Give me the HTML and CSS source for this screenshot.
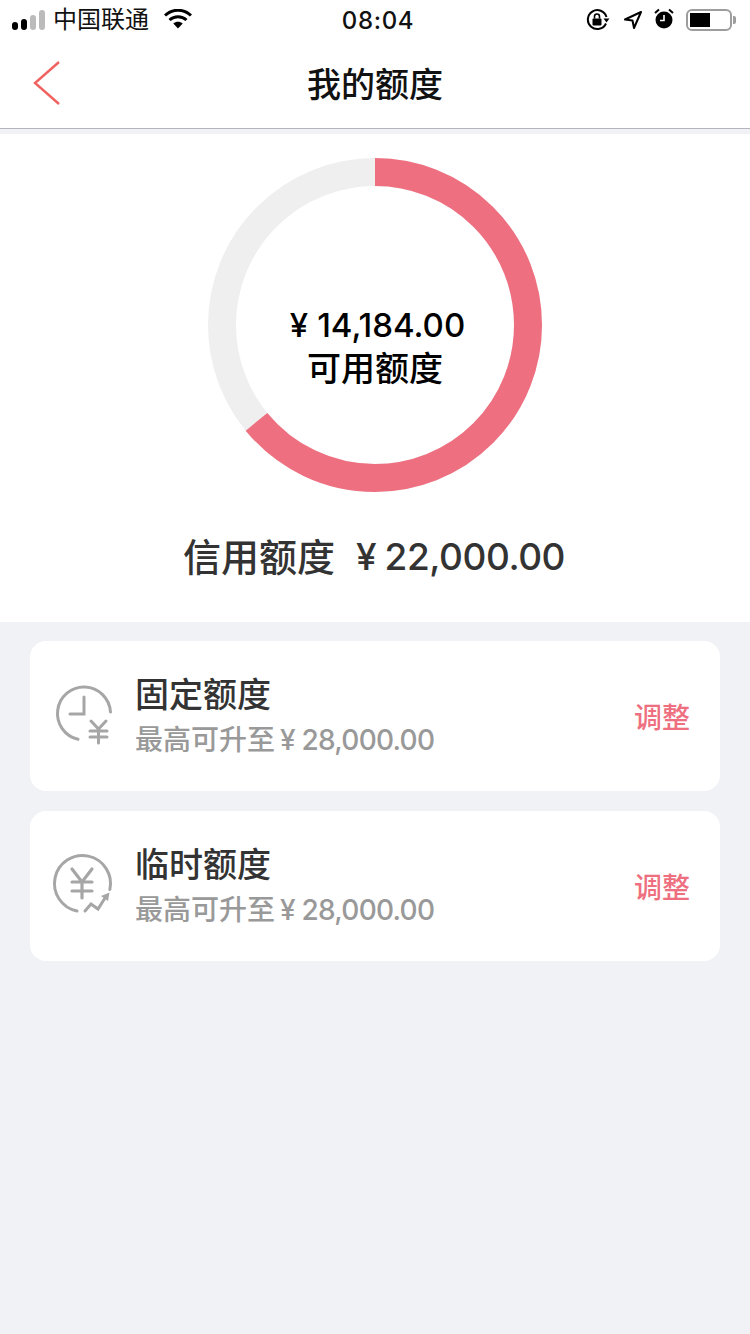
FILE: index.html
```
<!DOCTYPE html>
<html lang="zh">
<head>
<meta charset="utf-8">
<title>我的额度</title>
<link rel="stylesheet" href="styles.css">
</head>
<body>
<div class="status">
  <div class="status-left">
    <svg class="signal" width="34" height="20" viewBox="0 0 34 20"><rect x="0" y="12" width="6" height="8" rx="3" fill="#000"/><rect x="9" y="9" width="6" height="11" rx="3" fill="#000"/><rect x="18" y="5" width="6" height="15" rx="3" fill="#bbb"/><rect x="27" y="0" width="6" height="20" rx="3" fill="#bbb"/></svg>
    <span class="carrier">中国联通</span>
    <svg class="wifi" width="28" height="20" viewBox="0 0 28 20"><path d="M1 6.5 C8.5 -0.5 19.5 -0.5 27 6.5" fill="none" stroke="#000" stroke-width="3"/><path d="M5.5 11 C10.5 6.5 17.5 6.5 22.5 11" fill="none" stroke="#000" stroke-width="3"/><path d="M9.3 14.6 C12 12 16 12 18.7 14.6 L14 19.5 Z" fill="#000"/></svg>
  </div>
  <div class="status-time">08:04</div>
  <div class="status-right">
    <svg width="24" height="24" viewBox="0 0 24 24"><path d="M20 15.5 A9.5 9.5 0 1 1 20.5 9" fill="none" stroke="#000" stroke-width="2"/><path d="M17.5 10.5 L23.5 10.5 L20.5 14.5 Z" fill="#000"/><rect x="6.5" y="10.5" width="9" height="7" rx="1" fill="#000"/><path d="M8.5 10.5 V8.5 A2.5 2.5 0 0 1 13.5 8.5 V10.5" fill="none" stroke="#000" stroke-width="1.6"/></svg>
    <svg class="gps" width="20" height="20" viewBox="0 0 20 20"><path d="M18 2 L2 9.5 L9.5 10.5 L11 18 Z" fill="none" stroke="#000" stroke-width="2" stroke-linejoin="round"/></svg>
    <svg class="alarm" width="20" height="22" viewBox="0 0 20 22"><circle cx="10" cy="12" r="8.5" fill="#000"/><path d="M10 7 V12.5 H6" fill="none" stroke="#fff" stroke-width="1.6"/><path d="M1 5 L5 1.5 M19 5 L15 1.5" stroke="#000" stroke-width="2"/></svg>
    <div class="battery"><div class="battery-body"><div class="battery-fill"></div></div><div class="battery-tip"></div></div>
  </div>
</div>
<header class="nav">
  <svg class="back" width="30" height="46" viewBox="0 0 30 46"><path d="M27 2 L3 23 L27 44" fill="none" stroke="#F0625F" stroke-width="2.4"/></svg>
  <h1 class="nav-title">我的额度</h1>
</header>
<section class="summary">
  <div class="ring-wrap">
    <svg class="ring" width="334" height="334" viewBox="0 0 334 334">
      <circle cx="167" cy="167" r="153" fill="none" stroke="#EFEFEF" stroke-width="28"/>
      <circle cx="167" cy="167" r="153" fill="none" stroke="#EE7080" stroke-width="28" pathLength="100" stroke-dasharray="64.1 100" transform="rotate(-90 167 167)"/>
    </svg>
    <div class="ring-text">
      <div class="ring-amount"><span class="yen-ring">¥</span>14,184.00</div>
      <div class="ring-label">可用额度</div>
    </div>
  </div>
  <div class="credit"><span class="credit-label">信用额度</span><span class="credit-amount"><span class="yen">¥</span>22,000.00</span></div>
</section>
<main class="cards">
  <div class="card">
    <svg class="card-icon icon-fixed" width="60" height="64" viewBox="0 0 60 64"><path d="M24 55.3 A26.5 26.5 0 1 1 56.46 28" fill="none" stroke="#a6a6a6" stroke-width="3" stroke-linecap="round"/><path d="M30 13 V30 H16" fill="none" stroke="#a6a6a6" stroke-width="3" stroke-linecap="round"/><path d="M37 37 L44.5 45 L52 37 M36 47 H53 M36 53 H53 M44.5 45 V59" fill="none" stroke="#a6a6a6" stroke-width="3" stroke-linecap="round"/></svg>
    <div class="card-body">
      <div class="card-title">固定额度</div>
      <div class="card-sub">最高可升至<span class="yen-sub">¥</span><span class="num">28,000.00</span></div>
    </div>
    <div class="card-action">调整</div>
  </div>
  <div class="card">
    <svg class="card-icon icon-temp" width="60" height="64" viewBox="0 0 60 64"><path d="M25 57 A28 28 0 1 1 57.85 35.5" fill="none" stroke="#a6a6a6" stroke-width="3" stroke-linecap="round"/><path d="M20 15 L30 28 L40 15 M20 28 H40 M20 37 H40 M30 28 V44" fill="none" stroke="#a6a6a6" stroke-width="3.2" stroke-linecap="round"/><path d="M33 57 L39 50 L46 55 L53 44" fill="none" stroke="#a6a6a6" stroke-width="3" stroke-linecap="round"/><path d="M49 42 L57.5 38.5 L56 47 Z" fill="#a6a6a6"/></svg>
    <div class="card-body">
      <div class="card-title">临时额度</div>
      <div class="card-sub">最高可升至<span class="yen-sub">¥</span><span class="num">28,000.00</span></div>
    </div>
    <div class="card-action">调整</div>
  </div>
</main>
</body>
</html>
```
FILE: styles.css
```
* { box-sizing: border-box; }
html, body { margin: 0; padding: 0; }
body {
  width: 750px;
  height: 1334px;
  overflow: hidden;
  background: #F1F2F6;
  font-family: "Inter", "Noto Sans CJK SC", sans-serif;
  color: #000;
}
.status {
  height: 40px;
  background: #fff;
  display: grid;
  grid-template-columns: 1fr auto 1fr;
  align-items: center;
  padding: 0 14px 0 12px;
}
.status-left { display: flex; align-items: center; }
.signal { margin-right: 7px; }
.carrier { font-size: 24px; line-height: 40px; color: #111; font-weight: 400; }
.wifi { margin-left: 15px; margin-top: -2px; }
.status-time { font-size: 24px; letter-spacing: 0.7px; font-weight: 500; color: #111; padding-left: 8px; }
.status-right { display: flex; align-items: center; justify-content: flex-end; }
.gps { margin-left: 13px; }
.alarm { margin-left: 11px; margin-top: -2px; }
.battery { display: flex; align-items: center; margin-left: 12px; }
.battery-body { width: 46px; height: 22px; border: 2px solid #9d9d9d; border-radius: 6px; padding: 2px; }
.battery-fill { width: 20px; height: 100%; background: #000; }
.battery-tip { width: 3px; height: 8px; background: #9d9d9d; border-radius: 0 2px 2px 0; margin-left: 1px; }
.nav {
  height: 89px;
  background: #fff;
  border-bottom: 1px solid #B4B4BE;
  display: flex;
  align-items: center;
  justify-content: center;
  position: relative;
}
.back { position: absolute; left: 32px; top: 20px; }
.nav-title { margin: 0; padding-top: 2px; font-size: 34px; font-weight: 500; color: #111; line-height: 44px; }
.summary {
  margin-top: 5px;
  height: 488px;
  background: #fff;
  display: flex;
  flex-direction: column;
  align-items: center;
  padding-top: 24px;
}
.ring-wrap { display: grid; width: 334px; height: 334px; }
.ring, .ring-text { grid-area: 1 / 1; }
.ring-text { align-self: center; text-align: center; padding-top: 44px; }
.ring-amount { font-size: 33px; line-height: 44px; font-weight: 500; color: #000; padding-left: 5px; }
.ring-label { font-size: 34px; line-height: 44px; font-weight: 500; color: #000; }
.yen-ring { margin-right: 9px; }
.yen { margin-right: 8px; letter-spacing: 0; }
.credit { margin-top: 39px; padding-right: 2px; display: flex; align-items: center; font-size: 38px; line-height: 52px; color: #333; font-weight: 500; }
.credit-label { margin-right: 21px; }
.credit-amount { font-size: 37px; letter-spacing: -0.45px; }
.cards { padding: 19px 30px 0; display: flex; flex-direction: column; gap: 20px; }
.card {
  height: 150px;
  background: #fff;
  border-radius: 16px;
  display: flex;
  align-items: center;
  padding: 0 30px 0 0;
}
.card-icon { flex: none; overflow: visible; }
.icon-fixed { margin-left: 24px; margin-right: 21px; }
.icon-temp { margin-left: 22px; margin-right: 23px; }
.card-body { flex: 1; }
.card-title { font-size: 34px; line-height: 44px; color: #333; font-weight: 500; }
.card-sub { font-size: 28px; line-height: 38px; color: #999; margin-top: 4px; font-weight: 500; }
.yen-sub { margin: 0 6px 0 5px; }
.num { letter-spacing: -0.75px; }
.card-action { font-size: 28px; color: #EE7080; font-weight: 500; }
```
